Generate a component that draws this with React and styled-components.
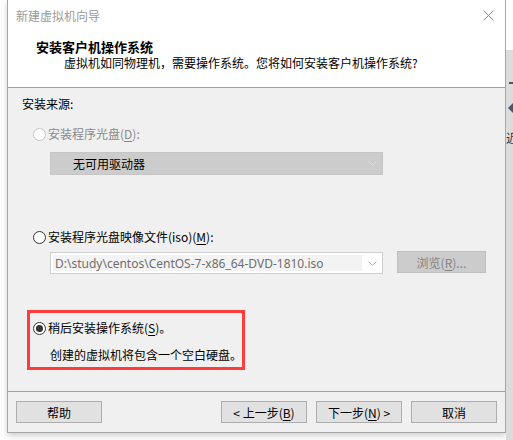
import React from 'react'
import styled, { createGlobalStyle } from 'styled-components'

const GlobalStyle = createGlobalStyle`
  html, body {
    margin: 0;
    padding: 0;
    background: #ffffff;
  }
  body {
    font-family: "Noto Sans CJK SC", "Microsoft YaHei", sans-serif;
    font-size: 12px;
    color: #000;
  }
`

const Desktop = styled.div`
  display: flex;
  width: 513px;
  height: 440px;
  overflow: hidden;
  background: #ffffff;
`

const Gutter = styled.div`
  width: 7px;
  flex: none;
`

const Window = styled.div`
  width: 497px;
  height: 432px;
  flex: none;
  display: flex;
  flex-direction: column;
  border: 1px solid #a6a6a6;
  border-top: none;
  background: #f0f0f0;
  box-shadow: 0 3px 6px rgba(0, 0, 0, 0.18);
`

const TitleBar = styled.div`
  height: 30px;
  display: flex;
  align-items: center;
  justify-content: space-between;
  padding: 0 10px 0 8px;
  background: #fff;
  color: #9a9a9a;
  font-size: 12px;
`

const CloseButton = styled.div`
  width: 14px;
  height: 14px;
  display: flex;
  align-items: center;
  justify-content: center;
`

const Header = styled.div`
  height: 57px;
  background: #fff;
  border-bottom: 1px solid #a0a0a0;
  display: flex;
  flex-direction: column;
`

const HeaderTitle = styled.div`
  margin: 9px 0 0 28px;
  font-weight: bold;
  font-size: 13px;
  line-height: 16px;
`

const HeaderText = styled.div`
  margin: 0 0 0 56px;
  line-height: 16px;
`

const Body = styled.div`
  height: 304px;
  display: flex;
  flex-direction: column;
  padding-left: 14px;
  border-bottom: 1px solid #a0a0a0;
  box-sizing: border-box;
`

const SectionLabel = styled.div`
  margin-top: 8px;
  line-height: 16px;
`

const OptionRow = styled.label`
  display: flex;
  align-items: center;
  gap: 2px;
  height: 16px;
  margin-top: ${p => p.$top}px;
  margin-left: ${p => p.$left ?? 11}px;
  color: ${p => (p.$disabled ? '#8a8a8a' : '#000')};
  line-height: 16px;
`

const Radio = styled.span`
  width: 13px;
  height: 13px;
  box-sizing: border-box;
  border-radius: 50%;
  border: 1px solid ${p => (p.$disabled ? '#c4c4c4' : '#333')};
  background: #fff;
  display: flex;
  align-items: center;
  justify-content: center;
  flex: none;

  &::after {
    content: '';
    display: ${p => (p.$checked ? 'block' : 'none')};
    width: 7px;
    height: 7px;
    border-radius: 50%;
    background: #333;
  }
`

const Key = styled.u`
  text-underline-offset: 2px;
`

const Combo = styled.div`
  width: 333px;
  height: ${p => p.$height}px;
  box-sizing: border-box;
  margin-top: ${p => p.$top}px;
  margin-left: 28px;
  display: flex;
  align-items: center;
  border: 1px solid ${p => (p.$filled ? '#c6c6c6' : '#cfcfcf')};
  background: ${p => (p.$filled ? '#cccccc' : '#fff')};
  flex: none;
`

const ComboField = styled.div`
  flex: 1;
  align-self: stretch;
  margin: 2px 0 2px 2px;
  padding-left: ${p => p.$indent}px;
  display: flex;
  align-items: center;
  background: ${p => (p.$filled ? 'transparent' : '#f3f3f3')};
  color: ${p => (p.$filled ? '#000' : '#6e6e6e')};
  font-family: ${p => (p.$filled ? '"Noto Sans CJK SC", sans-serif' : '"Noto Sans", "Segoe UI", sans-serif')};
  font-size: 12px;
  white-space: nowrap;
  overflow: hidden;
`

const Chevron = styled.div`
  width: 20px;
  display: flex;
  align-items: center;
  justify-content: center;
`

const ComboRow = styled.div`
  display: flex;
  align-items: flex-start;
  margin-top: 6px;
`

const Button = styled.div`
  width: 86px;
  height: 22px;
  box-sizing: border-box;
  flex: none;
  display: flex;
  align-items: center;
  justify-content: center;
  border: 1px solid ${p => (p.$disabled ? '#bfbfbf' : '#adadad')};
  background: ${p => (p.$disabled ? '#cccccc' : '#e1e1e1')};
  color: ${p => (p.$disabled ? '#838383' : '#000')};
  margin-left: ${p => p.$left ?? 0}px;
  font-size: 12px;
`

const BrowseButton = styled(Button)`
  width: 89px;
`

const Highlight = styled.div`
  width: 218px;
  height: 60px;
  box-sizing: border-box;
  margin-top: 36px;
  margin-left: 5px;
  border: 3px solid #ff3b3b;
  display: flex;
  flex-direction: column;
`

const Description = styled.div`
  margin: 11px 0 0 20px;
  line-height: 16px;
`

const Footer = styled.div`
  flex: 1;
  display: flex;
  justify-content: space-between;
  align-items: flex-start;
  padding: 9px 8px 0 8px;
`

const ButtonGroup = styled.div`
  display: flex;
  gap: 9px;
`

const SideStrip = styled.div`
  flex: 1;
  display: flex;
  flex-direction: column;
  overflow: hidden;
`

const SideTop = styled.div`
  height: 50px;
  background: #fff;
`

const SidePanel = styled.div`
  flex: 1;
  background: #dcdcdc;
  display: flex;
  flex-direction: column;
  color: #2a3a4a;
`

const SideDash = styled.div`
  width: 6px;
  height: 2px;
  background: #4a5866;
  margin: 32px 0 0 3px;
`

const SideArrow = styled.div`
  margin: 18px 0 0 2px;
  width: 0;
  height: 0;
  border-top: 6px solid transparent;
  border-bottom: 6px solid transparent;
  border-right: 6px solid #4a5866;
`

const SideGlyph = styled.div`
  margin-top: 15px;
  font-size: 12px;
  white-space: nowrap;
`

function App() {
  return (
    <>
      <GlobalStyle />
      <Desktop>
        <Gutter />
        <Window>
          <TitleBar>
            <span>新建虚拟机向导</span>
            <CloseButton>
              <svg width="11" height="11" viewBox="0 0 11 11">
                <path d="M0.5 0.5 L10.5 10.5 M10.5 0.5 L0.5 10.5" stroke="#8a8a8a" strokeWidth="1" />
              </svg>
            </CloseButton>
          </TitleBar>
          <Header>
            <HeaderTitle>安装客户机操作系统</HeaderTitle>
            <HeaderText>虚拟机如同物理机，需要操作系统。您将如何安装客户机操作系统?</HeaderText>
          </Header>
          <Body>
            <SectionLabel>安装来源:</SectionLabel>

            <OptionRow $top={14} $disabled>
              <Radio $disabled />
              <span>安装程序光盘(<Key>D</Key>):</span>
            </OptionRow>
            <Combo $top={10} $height={23} $filled>
              <ComboField $filled $indent={20}>无可用驱动器</ComboField>
              <Chevron>
                <svg width="9" height="5" viewBox="0 0 9 5">
                  <path d="M0.5 0.5 L4.5 4.5 L8.5 0.5" fill="none" stroke="#e0e0e0" />
                </svg>
              </Chevron>
            </Combo>

            <OptionRow $top={54}>
              <Radio />
              <span>安装程序光盘映像文件(iso)(<Key>M</Key>):</span>
            </OptionRow>
            <ComboRow>
              <Combo $top={1} $height={22}>
                <ComboField $indent={2}>D:\study\centos\CentOS-7-x86_64-DVD-1810.iso</ComboField>
                <Chevron>
                  <svg width="9" height="5" viewBox="0 0 9 5">
                    <path d="M0.5 0.5 L4.5 4.5 L8.5 0.5" fill="none" stroke="#b0b0b0" />
                  </svg>
                </Chevron>
              </Combo>
              <BrowseButton $disabled $left={14}>浏览(<Key>R</Key>)...</BrowseButton>
            </ComboRow>

            <Highlight>
              <OptionRow $top={7} $left={3}>
                <Radio $checked />
                <span>稍后安装操作系统(<Key>S</Key>)。</span>
              </OptionRow>
              <Description>创建的虚拟机将包含一个空白硬盘。</Description>
            </Highlight>
          </Body>
          <Footer>
            <Button>帮助</Button>
            <ButtonGroup>
              <Button>&lt; 上一步(<Key>B</Key>)</Button>
              <Button>下一步(<Key>N</Key>) &gt;</Button>
              <Button>取消</Button>
            </ButtonGroup>
          </Footer>
        </Window>
        <SideStrip>
          <SideTop />
          <SidePanel>
            <SideDash />
            <SideArrow />
            <SideGlyph>近</SideGlyph>
          </SidePanel>
        </SideStrip>
      </Desktop>
    </>
  )
}

export default App
